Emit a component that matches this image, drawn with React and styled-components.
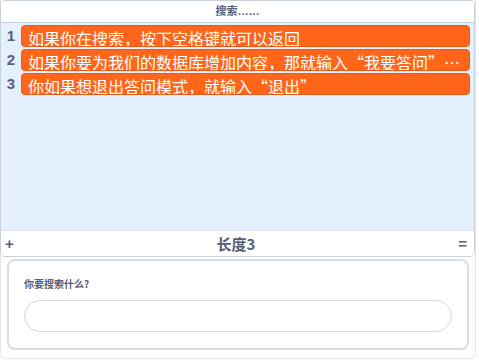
import React from "react";
import styled, { createGlobalStyle } from "styled-components";

const Global = createGlobalStyle`
  html, body { margin: 0; padding: 0; background: #ffffff; }
  body { font-family: "Liberation Sans", "Noto Sans CJK SC", sans-serif; }
  * { box-sizing: border-box; }
`;

const Stage = styled.div`
  width: 476px;
  height: 359px;
  border: 1px solid #e6e6e6;
  border-top: none;
  border-radius: 0 0 6px 6px;
  display: flex;
  flex-direction: column;
`;

const Monitor = styled.div`
  width: 475px;
  height: 257px;
  margin-left: -1px;
  border: 1px solid #c8d0dc;
  border-radius: 5px;
  background: #e5f0ff;
  display: flex;
  flex-direction: column;
  overflow: hidden;
`;

const Header = styled.div`
  height: 22px;
  line-height: 21px;
  background: #ffffff;
  border-bottom: 1px solid #c8d0dc;
  text-align: center;
  font-family: "Liberation Sans", "Noto Sans CJK SC", sans-serif;
  font-size: 11px;
  font-weight: bold;
  color: #575e75;
`;

const Body = styled.div`
  flex: 1;
  padding: 2px 4px 0 0;
  display: flex;
  flex-direction: column;
`;

const Row = styled.div`
  height: 24px;
  display: flex;
  align-items: flex-start;
`;

const Index = styled.div`
  width: 20px;
  flex: none;
  text-align: center;
  font-size: 15px;
  font-weight: bold;
  line-height: 21px;
  color: #575e75;
`;

const Item = styled.div`
  flex: 1;
  min-width: 0;
  height: 22px;
  background: #ff661a;
  border: 1px solid #e85a16;
  border-radius: 4px;
  padding: 4px 6px 0 6px;
  color: #ffffff;
  font-family: "Noto Sans CJK SC", sans-serif;
  font-size: 16px;
  line-height: 16px;
  white-space: nowrap;
  overflow: hidden;
  text-overflow: ellipsis;
`;

const Footer = styled.div`
  height: 26px;
  background: #ffffff;
  border-top: 1px solid #dfe5ee;
  display: flex;
  align-items: center;
  justify-content: space-between;
  padding: 0 7px 0 4px;
  color: #575e75;
  font-weight: bold;
`;

const FooterSide = styled.span`
  font-size: 15px;
  width: 12px;
  text-align: ${(p) => p.align};
`;

const Length = styled.span`
  font-family: "Noto Sans CJK SC", sans-serif;
  font-size: 15px;
`;

const Question = styled.div`
  margin: 2px 6px 0 6px;
  height: 91px;
  border: 2px solid #dcdcdc;
  border-radius: 8px;
  background: #ffffff;
  padding: 16px 15px 0 15px;
`;

const Label = styled.div`
  font-family: "Noto Sans CJK SC", sans-serif;
  font-size: 10px;
  font-weight: bold;
  line-height: 14px;
  color: #575e75;
  margin-bottom: 9px;
`;

const Input = styled.input`
  display: block;
  width: 100%;
  height: 32px;
  border: 1px solid #d6d6d6;
  border-radius: 16px;
  background: #ffffff;
  outline: none;
  padding: 0 12px;
  font-size: 12px;
`;

const items = [
  "如果你在搜索，按下空格键就可以返回",
  "如果你要为我们的数据库增加内容，那就输入“我要答问”即可",
  "你如果想退出答问模式，就输入“退出”",
];

export default function App() {
  return (
    <>
      <Global />
      <Stage>
        <Monitor>
          <Header>搜索……</Header>
          <Body>
            {items.map((t, i) => (
              <Row key={i}>
                <Index>{i + 1}</Index>
                <Item title={t}>{t}</Item>
              </Row>
            ))}
          </Body>
          <Footer>
            <FooterSide align="left">+</FooterSide>
            <Length>长度3</Length>
            <FooterSide align="right">=</FooterSide>
          </Footer>
        </Monitor>
        <Question>
          <Label>你要搜索什么?</Label>
          <Input type="text" />
        </Question>
      </Stage>
    </>
  );
}
